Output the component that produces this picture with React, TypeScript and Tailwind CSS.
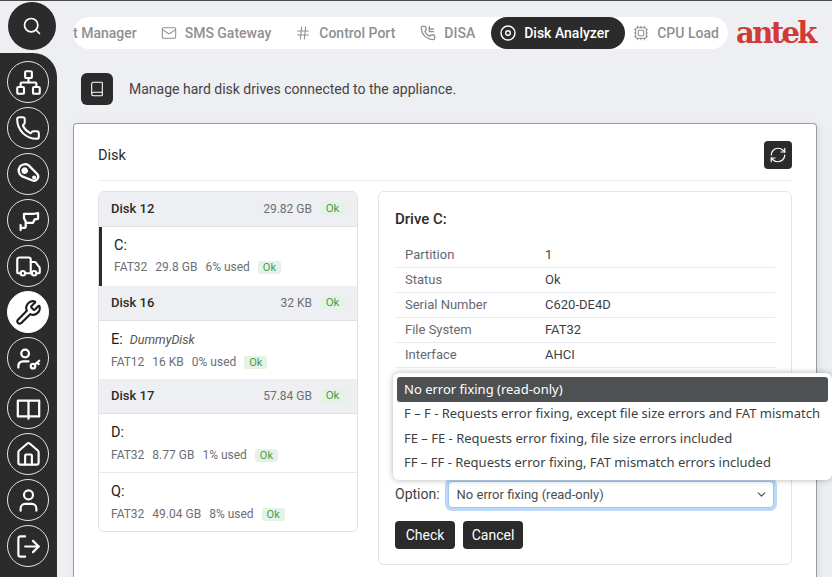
import React from "react";
import { Search, Network, Phone, Truck, Wrench, House, User, LogOut, Mail, Hash, Cpu, Book, RefreshCw, ChevronDown } from "lucide-react";

const Ico = ({ children }: { children: React.ReactNode }) => (
  <svg width="27" height="27" viewBox="0 0 24 24" fill="none" stroke="currentColor" strokeWidth="2" strokeLinecap="round" strokeLinejoin="round">
    {children}
  </svg>
);
const Cog = () => (
  <Ico>
    <path d="M4.6 4.6a6 6 0 0 1 7.6-.7l7.4 7.4a3.7 3.7 0 0 1-4 6l-9.2-3.6a6 6 0 0 1-1.8-9.1z" />
    <circle cx="8.6" cy="8.6" r="2.2" fill="currentColor" strokeWidth="1.6" strokeDasharray="1.1 1.1" />
    <circle cx="17" cy="14.6" r="0.8" />
  </Ico>
);
const Camera = () => (
  <Ico>
    <path d="M8 6h9l3.5-.5v5l-3 .5-1.5 3h-6L8 10z" />
    <path d="M9.5 14v3a1.5 1.5 0 0 1-1.5 1.5H5M5 16v4.5" />
  </Ico>
);
const UserKey = () => (
  <Ico>
    <circle cx="9" cy="7.5" r="3.4" />
    <path d="M3 20v-1.5a4 4 0 0 1 4-4h5" />
    <circle cx="16" cy="18.8" r="2" />
    <path d="M17.5 17.4l4-3.4M20 15.5l1 1.5" />
  </Ico>
);
const OpenBook = () => (
  <Ico>
    <path d="M12 5H2.5v14H12m0-14h9.5v14H12m0-14v16" />
  </Ico>
);
const PhoneBranch = () => (
  <svg width="16" height="16" viewBox="0 0 24 24" fill="none" stroke="currentColor" strokeWidth="2" strokeLinecap="round" strokeLinejoin="round">
    <path d="M13.832 16.568a1 1 0 0 0 1.213-.303l.355-.465A2 2 0 0 1 17 15h3a2 2 0 0 1 2 2v3a2 2 0 0 1-2 2A18 18 0 0 1 2 4a2 2 0 0 1 2-2h3a2 2 0 0 1 2 2v3a2 2 0 0 1-.8 1.6l-.468.351a1 1 0 0 0-.292 1.233 14 14 0 0 0 6.392 6.384" />
    <path d="M14 2v8M14 6h6M14 10h6" />
  </svg>
);

const side: [React.ReactNode, boolean, boolean][] = [
  [<Network size={27} strokeWidth={1.9} />, false, false],
  [<Phone size={26} strokeWidth={1.9} />, false, false],
  [<Cog />, false, false],
  [<Camera />, false, false],
  [<Truck size={27} strokeWidth={1.9} />, false, false],
  [<Wrench size={27} strokeWidth={1.9} />, true, false],
  [<UserKey />, false, false],
  [<OpenBook />, false, true],
  [<House size={27} strokeWidth={1.9} />, false, false],
  [<User size={27} strokeWidth={1.9} />, false, false],
  [<LogOut size={27} strokeWidth={1.9} />, false, false],
];

const Ok = () => (
  <span className="bg-[#e4f3e6] text-[#4a9a50] text-[11px] leading-[13px] px-[5px] rounded-[3px] h-[13px] inline-flex items-center">Ok</span>
);
const OkH = () => (
  <span className="bg-[#e4f3e6] text-[#4a9a50] text-[11.5px] w-[25px] justify-center rounded-[3px] h-[14px] inline-flex items-center">Ok</span>
);

const DiskHead = ({ name, size }: { name: string; size: string }) => (
  <div className="h-[35px] bg-[#eeeff2] border-b border-[#dfe1e6] pl-[12px] pr-[12px] flex items-center justify-between">
    <span className="text-[13px] font-medium text-[#2b2b2b]">{name}</span>
    <span className="flex items-center gap-[8px] text-[12px] text-[#6b6f75]">{size}<OkH /></span>
  </div>
);

const Part = ({ l, sub, meta, active, h, border, low }: { l: string; sub?: string; meta: string[]; active?: boolean; h: number; border?: boolean; low?: boolean }) => (
  <div className={(active ? "border-l-[3px] border-[#2b2b2b] pl-[12px] " : "pl-[12px] ") + (border ? "border-b border-[#e7e8ec] " : "") + "flex flex-col bg-white"} style={{ height: h }}>
    <div className="mt-[9px] h-[20px] flex items-center gap-[7px] text-[#222] text-[14.5px]">
      <span>{l}</span>
      {sub && <span className="italic text-[12.5px] text-[#555]">{sub}</span>}
    </div>
    <div className={(low ? "mt-[3px]" : "mt-[2px]") + " flex items-center gap-[8px] text-[12px] text-[#6b6f75]"}>
      {meta.map((m) => <span key={m}>{m}</span>)}
      <Ok />
    </div>
  </div>
);

const Row = ({ a, b }: { a: string; b: string }) => (
  <div className="h-[25px] border-b border-[#e9eaee] flex items-center text-[13px]">
    <span className="w-[150px] pl-[10px] text-[#666a70]">{a}</span>
    <span className="text-[#3d3f43]">{b}</span>
  </div>
);

const Tab = ({ icon, label, cls }: { icon: React.ReactNode; label: string; cls?: string }) => (
  <div className={"flex items-center gap-[8px] shrink-0 text-[#8e9094] font-medium text-[14px] " + (cls ?? "")}>{icon}<span>{label}</span></div>
);

export default function App() {
  return (
    <div className="w-[832px] h-[577px] overflow-hidden bg-[#eeeff2] border-t border-[#4a4c50] flex font-['Roboto',sans-serif]">
      <div className="w-[57px] shrink-0 flex flex-col">
        <div className="pl-[8px] pt-[1px] h-[52px]">
          <div className="w-[48px] h-[48px] rounded-full bg-[#2b2b2b] text-white flex items-center justify-center">
            <Search size={20} strokeWidth={2} />
          </div>
        </div>
        <div className="flex-1 bg-[#2b2b2b] rounded-tr-[24px] pl-[7px] pt-[8px] flex flex-col gap-[4px]">
          {side.map(([ic, act, extra], i) => (
            <div key={i} className={(act ? "bg-white text-[#1c1c1c] border-white" : "text-white border-[#e4e4e4]") + (extra ? " mt-[4px]" : "") + " w-[42px] h-[42px] shrink-0 rounded-full border flex items-center justify-center"}>
              {ic}
            </div>
          ))}
        </div>
      </div>

      <div className="flex-1 min-w-0 pl-[16px] flex flex-col">
        <div className="mt-[16px] flex items-center h-[32px]">
          <div className="w-[655px] h-[32px] bg-white rounded-full overflow-hidden flex items-center">
            <div className="flex items-center gap-[24px] shrink-0">
              <span className="text-[#8e9094] font-medium text-[14px] shrink-0 whitespace-nowrap">t Manager</span>
              <Tab icon={<Mail size={16} strokeWidth={1.6} />} label="SMS Gateway" />
              <Tab icon={<Hash size={16} strokeWidth={1.6} />} label="Control Port" />
              <Tab icon={<PhoneBranch />} label="DISA" cls="ml-[1px]" />
              <div className="flex items-center gap-[8px] shrink-0 bg-[#2b2b2b] text-white font-medium text-[14px] h-[32px] rounded-full pl-[9px] pr-[16px] ml-[-8px] mr-[-16px]">
                <svg width="16" height="16" viewBox="0 0 16 16" fill="none" stroke="currentColor" strokeWidth="1.4">
                  <circle cx="8" cy="8" r="7" />
                  <circle cx="8" cy="8" r="2.3" />
                </svg>
                <span>Disk Analyzer</span>
              </div>
              <Tab icon={<Cpu size={16} strokeWidth={1.6} />} label="CPU Load" />
            </div>
          </div>
          <span className="ml-[8px] text-[#d13a35] font-bold text-[29px] leading-[32px] tracking-[-2.6px] font-['DejaVu_Serif',serif]">antek</span>
        </div>

        <div className="mt-[24px] flex items-center gap-[16px] ml-[8px]">
          <div className="w-[32px] h-[32px] rounded-[6px] bg-[#2b2b2b] text-white flex items-center justify-center">
            <Book size={16} strokeWidth={1.6} />
          </div>
          <span className="text-[14px] text-[#444]">Manage hard disk drives connected to the appliance.</span>
        </div>

        <div className="mt-[18px] w-[744px] flex-1 bg-white rounded-t-[4px] border border-b-0 border-[#9a9ca2] px-[24px] shadow-[2px_2px_8px_rgba(0,0,0,0.08)]">
          <div className="h-[57px] pt-[6px] border-b border-[#eceef0] flex items-center justify-between">
            <span className="text-[14.5px] text-[#2b2b2b] mt-[2px]">Disk</span>
            <div className="w-[28px] h-[28px] rounded-[4px] bg-[#2b2b2b] text-white flex items-center justify-center">
              <RefreshCw size={18} strokeWidth={1.6} />
            </div>
          </div>

          <div className="mt-[10px] flex gap-[20px] items-start">
            <div className="w-[260px] shrink-0 rounded-[6px] border border-[#dfe1e6] overflow-hidden">
              <DiskHead name="Disk 12" size="29.82 GB" />
              <Part l="C:" meta={["FAT32", "29.8 GB", "6% used"]} active h={59} />
              <DiskHead name="Disk 16" size="32 KB" />
              <Part l="E:" sub="DummyDisk" meta={["FAT12", "16 KB", "0% used"]} h={58} low />
              <DiskHead name="Disk 17" size="57.84 GB" />
              <Part l="D:" meta={["FAT32", "8.77 GB", "1% used"]} h={59} border low />
              <Part l="Q:" meta={["FAT32", "49.04 GB", "8% used"]} h={58} low />
            </div>

            <div className="w-[414px] shrink-0 h-[374px] rounded-[6px] border border-[#e2e4e8] px-[16px] relative">
              <div className="mt-[17px] text-[15px] font-medium text-[#2b2b2b] leading-[20px]">Drive C:</div>
              <div className="mt-[14px]">
                <Row a="Partition" b="1" />
                <Row a="Status" b="Ok" />
                <Row a="Serial Number" b="C620-DE4D" />
                <Row a="File System" b="FAT32" />
                <Row a="Interface" b="AHCI" />
              </div>
              <div className="mt-[113px] flex items-center gap-[8px]">
                <span className="text-[14px] text-[#3d3f43]">Option:</span>
                <div className="w-[326px] h-[27px] rounded-[4px] border border-[#9ec5f0] shadow-[0_0_0_3px_#bcd8f8] bg-white flex items-center justify-between pl-[8px] pr-[5px] text-[13px] text-[#4a4c50]">
                  <span>No error fixing (read-only)</span>
                  <ChevronDown size={13} strokeWidth={2} />
                </div>
              </div>
              <div className="mt-[13px] flex gap-[8px]">
                <button className="w-[60px] h-[28px] rounded-[4px] bg-[#2b2b2b] text-white text-[14px]">Check</button>
                <button className="w-[60px] h-[28px] rounded-[4px] bg-[#2b2b2b] text-white text-[14px]">Cancel</button>
              </div>
              <div className="absolute left-[14px] top-[181px] w-[439px] h-[107px] bg-white rounded-[6px] shadow-[0_0_6px_rgba(0,0,0,0.3)] p-[4px] font-['Noto_Sans',sans-serif] text-[13px] text-[#3d3f43]">
                <div className="h-[25px] rounded-[3px] bg-[#4e5154] text-white flex items-center pl-[7px]">No error fixing (read-only)</div>
                <div className="h-[24px] flex items-center pl-[7px]">F – F - Requests error fixing, except file size errors and FAT mismatch</div>
                <div className="h-[25px] flex items-center pl-[7px]">FE – FE - Requests error fixing, file size errors included</div>
                <div className="h-[24px] flex items-center pl-[7px]">FF – FF - Requests error fixing, FAT mismatch errors included</div>
              </div>
            </div>
          </div>
        </div>
      </div>
    </div>
  );
}
